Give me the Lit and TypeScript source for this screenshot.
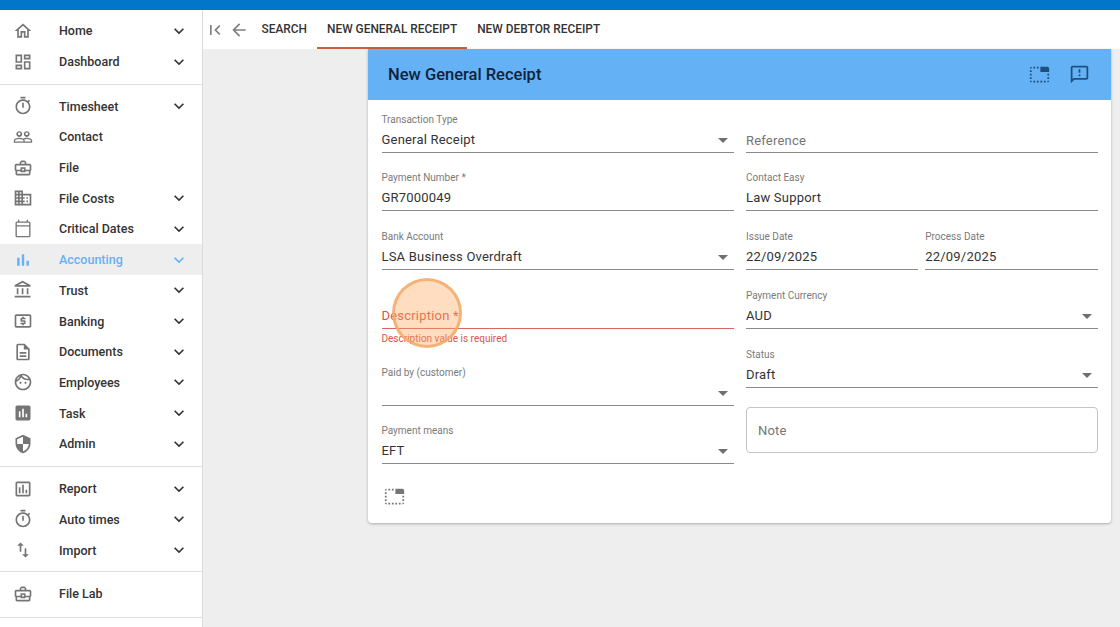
import { LitElement, html, css } from "lit";
import { customElement } from "lit/decorators.js";

const ICONS: Record<string, string> = {
  home: "M12 5.69l5 4.5V18h-2v-6H9v6H7v-7.81l5-4.5M12 3L2 12h3v8h6v-6h2v6h6v-8h3L12 3z",
  dashboard: "M19 5v2h-4V5h4M9 5v6H5V5h4m10 8v6h-4v-6h4M9 17v2H5v-2h4M21 3h-8v6h8V3zM11 3H3v10h8V3zm10 8h-8v10h8V11zm-10 4H3v6h8v-6z",
  timer: "M15 1H9v2h6V1zm-4 13h2V8h-2v6zm8.03-6.61l1.42-1.42c-.43-.51-.9-.99-1.41-1.41l-1.42 1.42C16.07 4.74 14.12 4 12 4c-4.97 0-9 4.03-9 9s4.02 9 9 9 9-4.03 9-9c0-2.12-.74-4.07-1.97-5.61zM12 20c-3.87 0-7-3.13-7-7s3.13-7 7-7 7 3.13 7 7-3.13 7-7 7z",
  people: "M16.5 13c-1.2 0-3.07.34-4.5 1-1.43-.67-3.3-1-4.5-1C5.33 13 1 14.08 1 16.25V19h22v-2.75c0-2.17-4.33-3.25-6.5-3.25zm-4 4.5h-10v-1.25c0-.54 2.56-1.75 5-1.75s5 1.21 5 1.75v1.25zm9 0H14v-1.25c0-.46-.2-.86-.52-1.22.88-.3 1.96-.53 3.02-.53 2.44 0 5 1.21 5 1.75v1.25zM7.5 12c1.93 0 3.5-1.57 3.5-3.5S9.43 5 7.5 5 4 6.57 4 8.5 5.57 12 7.5 12zm0-5.5c.83 0 1.5.67 1.5 1.5s-.67 1.5-1.5 1.5S6 8.83 6 8s.67-1.5 1.5-1.5zm9 5.5c1.93 0 3.5-1.57 3.5-3.5S18.43 5 16.5 5 13 6.57 13 8.5s1.57 3.5 3.5 3.5zm0-5.5c.83 0 1.5.67 1.5 1.5s-.67 1.5-1.5 1.5S15 8.83 15 8s.67-1.5 1.5-1.5z",
  case: "M20 7h-4V5l-2-2h-4L8 5v2H4c-1.1 0-2 .9-2 2v5c0 .75.4 1.38 1 1.73V19c0 1.11.89 2 2 2h14c1.11 0 2-.89 2-2v-3.28c.59-.35 1-.99 1-1.72V9c0-1.1-.9-2-2-2zM10 5h4v2h-4V5zM4 9h16v5h-5v-3H9v3H4V9zm9 6h-2v-2h2v2zm6 4H5v-3h4v1h6v-1h4v3z",
  domain: "M12 7V3H2v18h20V7H12zM6 19H4v-2h2v2zm0-4H4v-2h2v2zm0-4H4V9h2v2zm0-4H4V5h2v2zm4 12H8v-2h2v2zm0-4H8v-2h2v2zm0-4H8V9h2v2zm0-4H8V5h2v2zm10 12h-8v-2h2v-2h-2v-2h2v-2h-2V9h8v10zm-2-8h-2v2h2v-2zm0 4h-2v2h2v-2z",
  calendar: "M19 3h-1V1h-1.6v2H7.6V1H6v2H5C3.9 3 3 3.9 3 5v15c0 1.1.9 2 2 2h14c1.1 0 2-.9 2-2V5c0-1.1-.9-2-2-2zm.4 17c0 .2-.2.4-.4.4H5c-.2 0-.4-.2-.4-.4V9h14.8v11zM4.6 7.4V5c0-.2.2-.4.4-.4h14c.2 0 .4.2.4.4v2.4H4.6z",
  bars: "M5 9.2h3V19H5zM10.6 5h2.8v14h-2.8zm5.6 8H19v6h-2.8z",
  bank: "M6.5 10h-2v7h2v-7zm6 0h-2v7h2v-7zm8.5 9H2v2h19v-2zm-2.5-9h-2v7h2v-7zm-7-6.74L16.71 6H6.29l5.21-2.74m0-2.26L2 6v2h19V6l-9.5-5z",
  atm: "M11 17h2v-1h1c.55 0 1-.45 1-1v-3c0-.55-.45-1-1-1h-3v-1h4V8h-2V7h-2v1h-1c-.55 0-1 .45-1 1v3c0 .55.45 1 1 1h3v1H9v2h2v1zm9-13H4c-1.11 0-1.99.89-1.99 2L2 18c0 1.11.89 2 2 2h16c1.11 0 2-.89 2-2V6c0-1.11-.89-2-2-2zm0 14H4V6h16v12z",
  doc: "M8 16h8v2H8zm0-4h8v2H8zm6-10H6c-1.1 0-2 .9-2 2v16c0 1.1.89 2 1.99 2H18c1.1 0 2-.9 2-2V8l-6-6zm4 18H6V4h7v5h5v11z",
  face: "M10.25 13c0 .69-.56 1.25-1.25 1.25S7.75 13.69 7.75 13s.56-1.25 1.25-1.25 1.25.56 1.25 1.25zM15 11.75c-.69 0-1.25.56-1.25 1.25s.56 1.25 1.25 1.25 1.25-.56 1.25-1.25-.56-1.25-1.25-1.25zm7 .25c0 5.52-4.48 10-10 10S2 17.52 2 12 6.48 2 12 2s10 4.48 10 10zM10.66 4.12C12.06 6.44 14.6 8 17.5 8c.46 0 .91-.05 1.34-.12C17.44 5.56 14.9 4 12 4c-.46 0-.91.05-1.34.12zM4.42 9.47c1.71-.97 3.03-2.55 3.66-4.44C6.37 6 5.05 7.58 4.42 9.47zM20 12c0-.78-.12-1.53-.33-2.24-.7.15-1.42.24-2.17.24-3.13 0-5.92-1.44-7.76-3.69C8.69 8.87 6.6 10.88 4 11.86c.01.04 0 .09 0 .14 0 4.41 3.59 8 8 8s8-3.59 8-8z",
  task: "M19 3H5c-1.1 0-2 .9-2 2v14c0 1.1.9 2 2 2h14c1.1 0 2-.9 2-2V5c0-1.1-.9-2-2-2zM9 17H7v-7h2v7zm4 0h-2V7h2v10zm4 0h-2v-4h2v4z",
  shield: "M12 1L3 5v6c0 5.55 3.84 10.74 9 12 5.16-1.26 9-6.45 9-12V5l-9-4zm0 10.99h7c-.53 4.12-3.28 7.79-7 8.94V12H5V6.3l7-3.11v8.8z",
  report: "M19 3H5c-1.1 0-2 .9-2 2v14c0 1.1.9 2 2 2h14c1.1 0 2-.9 2-2V5c0-1.1-.9-2-2-2zm0 16H5V5h14v14zM7 10h2v7H7zm4-3h2v10h-2zm4 6h2v4h-2z",
  swap: "M16 17.01V10h-2v7.01h-3L15 21l4-3.99h-3zM9 3L5 6.99h3V14h2V6.99h3L9 3z",
  chevron: "M16.59 8.59L12 13.17 7.41 8.59 6 10l6 6 6-6z",
  first: "M18.41 16.59L13.82 12l4.59-4.59L17 6l-6 6 6 6zM6 6h2v12H6z",
  back: "M20 11H7.83l5.59-5.59L12 4l-8 8 8 8 1.41-1.41L7.83 13H20v-2z",
  tab: "M1 9h2V7H1v2zm0 4h2v-2H1v2zm0-8h2V3c-1.1 0-2 .9-2 2zm8 16h2v-2H9v2zm-8-4h2v-2H1v2zm2 4v-2H1c0 1.1.9 2 2 2zM21 3h-8v6h10V5c0-1.1-.9-2-2-2zm0 14h2v-2h-2v2zM9 5h2V3H9v2zM5 21h2v-2H5v2zM5 5h2V3H5v2zm16 16c1.1 0 2-.9 2-2h-2v2zm0-8h2v-2h-2v2zm-8 8h2v-2h-2v2zm4 0h2v-2h-2v2z",
  feedback: "M20 2H4c-1.1 0-1.99.9-1.99 2L2 22l4-4h14c1.1 0 2-.9 2-2V4c0-1.1-.9-2-2-2zm0 14H5.17L4 17.17V4h16v12zm-9-4h2v2h-2zm0-6h2v4h-2z",
};

type NavItem = { label: string; icon: string; more?: boolean; active?: boolean };

const NAV: NavItem[][] = [
  [
    { label: "Home", icon: "home", more: true },
    { label: "Dashboard", icon: "dashboard", more: true },
  ],
  [
    { label: "Timesheet", icon: "timer", more: true },
    { label: "Contact", icon: "people" },
    { label: "File", icon: "case" },
    { label: "File Costs", icon: "domain", more: true },
    { label: "Critical Dates", icon: "calendar", more: true },
    { label: "Accounting", icon: "bars", more: true, active: true },
    { label: "Trust", icon: "bank", more: true },
    { label: "Banking", icon: "atm", more: true },
    { label: "Documents", icon: "doc", more: true },
    { label: "Employees", icon: "face", more: true },
    { label: "Task", icon: "task", more: true },
    { label: "Admin", icon: "shield", more: true },
  ],
  [
    { label: "Report", icon: "report", more: true },
    { label: "Auto times", icon: "timer", more: true },
    { label: "Import", icon: "swap", more: true },
  ],
  [{ label: "File Lab", icon: "case" }],
];

const icon = (name: string, cls = "") =>
  html`<svg class="icon ${cls}" viewBox="0 0 24 24"><path d=${ICONS[name]}></path></svg>`;

@customElement("app-root")
export class AppRoot extends LitElement {
  static styles = css`
    :host {
      display: flex;
      flex-direction: column;
      position: relative;
      height: 100vh;
      overflow: hidden;
      background: #eeeeee;
      color: #333;
      font-family: Roboto, "Liberation Sans", sans-serif;
    }
    .topbar {
      height: 10px;
      flex: none;
      background: #0277c9;
    }
    .body {
      flex: 1;
      display: flex;
      min-height: 0;
    }
    .icon {
      display: block;
      flex: none;
      width: 20px;
      height: 20px;
      fill: #757575;
    }

    nav {
      width: 202px;
      flex: none;
      background: #fff;
      border-right: 1px solid #dcdcdc;
    }
    .group {
      padding: 6px 0 6.5px;
      border-bottom: 1px solid #dedede;
    }
    .group:first-child {
      padding: 5.5px 0 7px;
    }
    .group:nth-child(3) {
      padding: 6.8px 0 6px;
    }
    .group:last-child {
      padding-bottom: 7.5px;
    }
    .item {
      display: flex;
      align-items: center;
      height: 30.7px;
      padding: 0 13px 0 12.5px;
      font-size: 12.5px;
      font-weight: 500;
    }
    .item span {
      flex: 1;
      margin-left: 26.5px;
    }
    .item .chev {
      fill: #333;
    }
    .item.active {
      background: #eeeeee;
      color: #64b1f5;
    }
    .item.active .icon {
      fill: #64b1f5;
    }

    main {
      flex: 1;
      display: flex;
      flex-direction: column;
      min-width: 0;
    }
    .tabbar {
      display: flex;
      align-items: center;
      height: 39px;
      flex: none;
      background: #fff;
      font-size: 11.9px;
      font-weight: 500;
    }
    .tabbar .nav-btn {
      width: 24px;
      display: flex;
      justify-content: center;
    }
    .tabbar .nav-btn .icon {
      fill: #808080;
    }
    .tab {
      display: flex;
      align-items: center;
      height: 100%;
      box-sizing: border-box;
      padding: 0 10px;
      border-bottom: 2px solid transparent;
    }
    .tab.active {
      border-bottom-color: #c9603a;
    }
    .tab.first {
      margin-left: 0.5px;
    }
    .content {
      flex: 1;
      display: flex;
      justify-content: flex-end;
      align-items: flex-start;
      padding-right: 9px;
    }

    .card {
      width: 743px;
      background: #fff;
      border-radius: 0 0 4px 4px;
      box-shadow: 0 1px 3px rgba(0, 0, 0, 0.28);
    }
    .card-head {
      display: flex;
      align-items: center;
      height: 51px;
      padding: 0 21px 0 20px;
      background: #64b1f5;
      color: #10233c;
      font-size: 16.5px;
      font-weight: 500;
    }
    .card-head .title {
      flex: 1;
    }
    .card-head .icon {
      width: 21px;
      height: 21px;
      margin-left: 19px;
      fill: #1d4f7f;
    }
    .form {
      display: grid;
      grid-template-columns: 352px 351.5px;
      column-gap: 12.5px;
      padding: 11.7px 13.5px 0;
    }
    .col {
      display: flex;
      flex-direction: column;
      gap: 17.8px;
    }
    .pair {
      display: flex;
      gap: 7px;
    }
    .pair .field {
      flex: 1;
    }
    .field {
      position: relative;
      height: 40px;
      border-bottom: 1px solid #8a8a8a;
    }
    .field label {
      display: block;
      height: 15px;
      line-height: 15px;
      font-size: 10px;
      color: #7a7a7a;
    }
    .field .value {
      height: 25px;
      line-height: 25px;
      font-size: 13px;
      letter-spacing: 0.2px;
    }
    .field .value.placeholder {
      line-height: 27px;
      color: #757575;
    }
    .field.select::after {
      content: "";
      position: absolute;
      right: 5.5px;
      bottom: 9px;
      border: 5px solid transparent;
      border-top-color: #6f6f6f;
      border-bottom-width: 0;
    }
    .field.error {
      height: 39.5px;
      border-bottom: 1.5px solid #d9675e;
    }
    .field.error .value {
      line-height: 25px;
      color: #d9534a;
    }
    .hint {
      height: 15.3px;
      margin-top: -14.8px;
      line-height: 14px;
      font-size: 10px;
      color: #d9534a;
    }
    .note {
      box-sizing: border-box;
      height: 46px;
      margin-top: 1px;
      padding: 0 11px;
      line-height: 46px;
      border: 1px solid #c4c4c4;
      border-radius: 4px;
      font-size: 13px;
      letter-spacing: 0.2px;
      color: #757575;
    }
    .card-foot {
      padding: 22px 0 16px 15.5px;
    }
    .card-foot .icon {
      width: 21px;
      height: 21px;
    }

    .pointer {
      position: absolute;
      left: 392px;
      top: 278px;
      box-sizing: border-box;
      width: 70px;
      height: 70px;
      border-radius: 50%;
      background: rgba(255, 165, 90, 0.38);
      border: 3px solid rgba(243, 170, 105, 0.85);
    }
  `;

  private field(label: string, value: string, select = false) {
    return html`<div class="field ${select ? "select" : ""}">
      <label>${label}</label>
      <div class="value">${value}</div>
    </div>`;
  }

  render() {
    return html`
      <div class="topbar"></div>
      <div class="body">
        <nav>
          ${NAV.map(
            (group) => html`<div class="group">
              ${group.map(
                (it) => html`<div class="item ${it.active ? "active" : ""}">
                  ${icon(it.icon)}
                  <span>${it.label}</span>
                  ${it.more ? icon("chevron", "chev") : null}
                </div>`
              )}
            </div>`
          )}
        </nav>
        <main>
          <div class="tabbar">
            <div class="nav-btn">${icon("first")}</div>
            <div class="nav-btn">${icon("back")}</div>
            <div class="tab first">SEARCH</div>
            <div class="tab active">NEW GENERAL RECEIPT</div>
            <div class="tab">NEW DEBTOR RECEIPT</div>
          </div>
          <div class="content">
            <div class="card">
              <div class="card-head">
                <div class="title">New General Receipt</div>
                ${icon("tab")} ${icon("feedback")}
              </div>
              <div class="form">
                <div class="col">
                  ${this.field("Transaction Type", "General Receipt", true)}
                  ${this.field("Payment Number *", "GR7000049")}
                  ${this.field("Bank Account", "LSA Business Overdraft", true)}
                  <div class="field error">
                    <label></label>
                    <div class="value">Description *</div>
                  </div>
                  <div class="hint">Description value is required</div>
                  ${this.field("Paid by (customer)", "", true)}
                  ${this.field("Payment means", "EFT", true)}
                </div>
                <div class="col">
                  <div class="field">
                    <label></label>
                    <div class="value placeholder">Reference</div>
                  </div>
                  ${this.field("Contact Easy", "Law Support")}
                  <div class="pair">
                    ${this.field("Issue Date", "22/09/2025")}
                    ${this.field("Process Date", "22/09/2025")}
                  </div>
                  ${this.field("Payment Currency", "AUD", true)}
                  ${this.field("Status", "Draft", true)}
                  <div class="note">Note</div>
                </div>
              </div>
              <div class="card-foot">${icon("tab")}</div>
            </div>
          </div>
        </main>
      </div>
      <div class="pointer"></div>
    `;
  }
}
